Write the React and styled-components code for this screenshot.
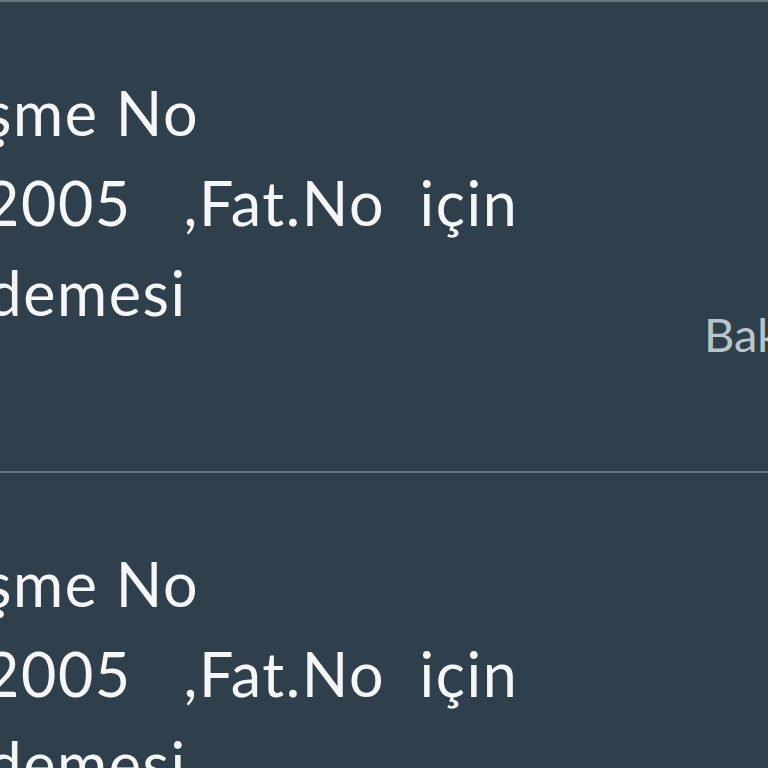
import styled, { createGlobalStyle } from "styled-components";

const Global = createGlobalStyle`
  html, body {
    margin: 0;
    padding: 0;
    background: #2f3f4b;
    overflow: hidden;
  }
  body {
    font-family: Lato, "Noto Sans", sans-serif;
  }
`;

const List = styled.div`
  width: 768px;
  height: 768px;
  overflow: hidden;
  background: #2f3f4b;
`;

const Row = styled.div`
  display: flex;
  align-items: flex-start;
  height: 471px;
  padding-top: 66px;
  border-top: 2px solid #66767f;
  box-sizing: border-box;
`;

const Details = styled.div`
  flex: 1;
  margin-left: -164px;
  color: #f4f6f7;
  font-size: 61px;
  letter-spacing: 1.6px;
  line-height: 90px;
  white-space: pre;
`;

const Amount = styled.div`
  margin-top: 238px;
  margin-right: -120px;
  width: 184px;
  color: #b9c5cd;
  font-size: 47px;
  line-height: 1.2;
  white-space: nowrap;
`;

const items = [
  { lines: ["Sözleşme No", "00012005   ,Fat.No  için", "Ara ödemesi"], amount: "Bakiye" },
  { lines: ["Sözleşme No", "00012005   ,Fat.No  için", "Ara ödemesi"], amount: "Bakiye" },
];

const App = () => {
  return (
    <List>
      <Global />
      {items.map((item, i) => (
        <Row key={i}>
          <Details>
            {item.lines.map((l) => (
              <div key={l}>{l}</div>
            ))}
          </Details>
          <Amount>{item.amount}</Amount>
        </Row>
      ))}
    </List>
  );
};

export default App;
